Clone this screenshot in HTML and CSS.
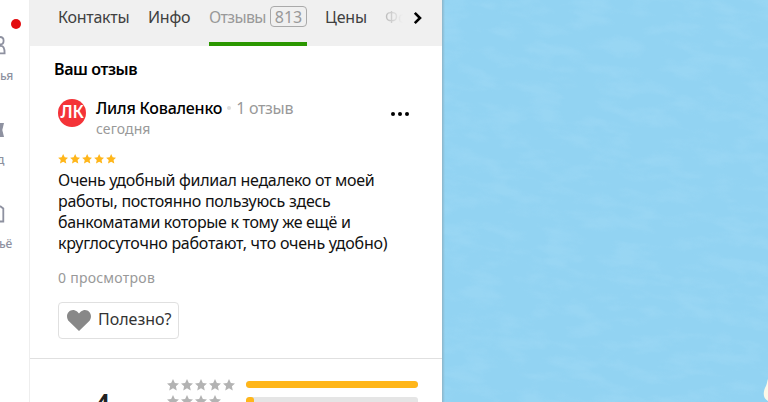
FILE: index.html
```html
<!DOCTYPE html>
<html lang="ru">
<head>
<meta charset="utf-8">
<title>Отзывы</title>
<link rel="stylesheet" href="styles.css">
</head>
<body>
<svg class="defs" width="0" height="0">
  <symbol id="star" viewBox="0 0 24 24"><path d="M12 0l3.700 7.900 8.300.9-6.200 5.600 1.700 8.600-7.500-4.300L4.500 23l1.700-8.600L0 8.800l8.300-.9z"/></symbol>
</svg>
<div class="app">
  <aside class="rail">
    <span class="dot"></span>
    <div class="item"><svg viewBox="0 0 8 20"><path d="M0 2C4.800 2 4.800 9.500 0 9.500M0 11C3.500 10.500 4.600 13 4.600 18.300H0" /></svg><span>ья</span></div>
    <div class="item second"><svg viewBox="0 0 8 20"><path class="fill" d="M0 4h4L2.300 11 4 18H0z"/></svg><span>д</span></div>
    <div class="item third"><svg viewBox="0 0 8 20"><path d="M0 3l3.300 2.500V18.500H0"/></svg><span>ьё</span></div>
  </aside>
  <main class="panel">
    <nav class="tabs">
      <a class="t1">Контакты</a>
      <a class="t2">Инфо</a>
      <a class="active"><span class="t3">Отзывы</span><span class="count">813</span></a>
      <a class="t4">Цены</a>
      <a class="faded">Фо</a>
      <svg class="next" viewBox="0 0 10 14"><path d="M1.800 1.800L7 7l-5.200 5.200"/></svg>
    </nav>
    <section class="review">
      <h2>Ваш отзыв</h2>
      <header class="author">
        <span class="avatar">ЛК</span>
        <div class="who">
          <div class="line"><b>Лиля Коваленко</b><i></i><span>1 отзыв</span></div>
          <div class="date">сегодня</div>
        </div>
        <div class="more"><i></i><i></i><i></i></div>
      </header>
      <div class="rating"><svg><use href="#star"/></svg><svg><use href="#star"/></svg><svg><use href="#star"/></svg><svg><use href="#star"/></svg><svg><use href="#star"/></svg></div>
      <p class="text"><span class="l1">Очень удобный филиал недалеко от моей</span><span class="l2">работы, постоянно пользуюсь здесь</span><span class="l3">банкоматами которые к тому же ещё и</span><span class="l4">круглосуточно работают, что очень удобно)</span></p>
      <div class="views">0 просмотров</div>
      <button class="useful"><svg viewBox="0 0 24 21"><path d="M12 21L2.200 11.600C-3 6 2-1.500 8 .4c1.800.6 3.200 1.700 4 3.200.8-1.500 2.200-2.600 4-3.200 6-1.900 11 5.600 5.800 11.200z"/></svg><span>Полезно?</span></button>
    </section>
    <section class="summary">
      <div class="score">4</div>
      <div class="rows">
        <div class="row"><div class="stars"><svg><use href="#star"/></svg><svg><use href="#star"/></svg><svg><use href="#star"/></svg><svg><use href="#star"/></svg><svg><use href="#star"/></svg></div><div class="bar"><span style="width:100%"></span></div></div>
        <div class="row"><div class="stars"><svg><use href="#star"/></svg><svg><use href="#star"/></svg><svg><use href="#star"/></svg><svg><use href="#star"/></svg></div><div class="bar"><span style="width:4.5%"></span></div></div>
      </div>
    </section>
  </main>
  <div class="map">
    <svg width="326" height="402">
      <filter id="water" x="0" y="0" width="100%" height="100%" color-interpolation-filters="sRGB">
        <feTurbulence type="fractalNoise" baseFrequency="0.028 0.075" numOctaves="4" seed="4"/>
        <feColorMatrix values="0 0 0 0 .62  0 0 0 0 .85  0 0 0 0 .96  3 0 0 0 -1.300"/>
      </filter>
      <g transform="rotate(8 163 201)"><rect x="-50" y="-50" width="430" height="500" filter="url(#water)" opacity=".55"/></g>
      <path class="land" d="M326 379c-1 2-1 6-3 9-2 5-2 10 3 13z"/>
    </svg>
  </div>
</div>
</body>
</html>
```
FILE: styles.css
```css
* { box-sizing: border-box; }
body { margin: 0; overflow: hidden; background: #fff; font: 16px/21px "Noto Sans", sans-serif; color: #1a1a1a; }
.defs { position: absolute; }
.app { display: grid; grid-template-columns: 30px 412px 326px; width: 768px; height: 402px; overflow: hidden; white-space: nowrap; }
.rail { position: relative; border-right: 1px solid #eee; padding-top: 35px; color: #8e91a0; overflow: hidden; }
.dot { position: absolute; left: 11px; top: 19px; width: 10px; height: 10px; border-radius: 50%; background: #e30c0f; }
.item { height: 84px; }
.item svg { display: block; width: 8px; height: 20px; fill: none; stroke: #8e91a0; stroke-width: 1.800; }
.item .fill { fill: #8e91a0; stroke: none; }
.item span { display: block; margin-top: 12px; font-size: 12px; line-height: 18px; font-weight: 500; letter-spacing: -.3px; }
.item.second span { margin-left: -3px; }
.item.third span { margin-left: -1px; }

.tabs { display: flex; height: 46px; padding: 7px 18px 0 28px; background: #f0f0f0; color: #404040; }
.tabs a { flex: none; }
.t1 { width: 90px; letter-spacing: -.25px; }
.t2 { width: 61px; letter-spacing: -.25px; }
.active { display: flex; justify-content: space-between; width: 98px; border-bottom: 4px solid #2b9700; color: #999; }
.t3 { letter-spacing: -.65px; }
.count { width: 37px; height: 21px; margin-top: -1px; border: 1px solid #aaa; border-radius: 4px; line-height: 20px; text-align: center; }
.t4 { width: 60px; margin-left: 18px; letter-spacing: -.15px; }
.tabs .faded { width: 18px; overflow: hidden; color: transparent; background: linear-gradient(90deg, #bbb, #f0f0f0); background-clip: text; -webkit-background-clip: text; }
.next { width: 10px; height: 14px; margin: 4px 0 0 10px; flex: none; fill: none; stroke: #000; stroke-width: 2.600; }

.review { height: 313px; padding: 13px 24px 0 28px; border-bottom: 1px solid #e0e0e0; }
h2 { margin: 0 0 0 -4px; font-size: 16px; line-height: 21px; font-weight: 600; color: #000; letter-spacing: -.4px; }
.author { display: flex; height: 54px; margin-top: 17px; }
.avatar { width: 28px; height: 28px; margin-top: 2px; border-radius: 50%; background: #f43338; color: #fff; font-weight: 600; font-size: 17px; line-height: 25px; text-align: center; letter-spacing: -.3px; }
.who { margin-left: 10px; }
.line { display: flex; align-items: center; height: 22px; color: #999; }
.line b { font-weight: 500; color: #000; letter-spacing: -.22px; }
.line span { letter-spacing: -.3px; }
.line i { width: 4px; height: 4px; margin: 0 5px; border-radius: 50%; background: #ddd; }
.date { font-size: 14px; line-height: 20px; color: #999; letter-spacing: .1px; }
.more { display: flex; gap: 3px; margin: 15px 9px 0 auto; }
.more i { width: 4px; height: 4px; border-radius: 50%; background: #000; }
.rating { display: flex; gap: 1.700px; height: 18px; }
.rating svg { width: 10.300px; height: 10px; margin-top: 3px; fill: #ffb61a; }
.text { margin: 1px 0 0; color: #111; }
.text span { display: block; height: 21px; width: max-content; }
.l1 { letter-spacing: -.3px; }
.l2 { letter-spacing: -.27px; }
.l3 { letter-spacing: -.32px; }
.l4 { letter-spacing: -.25px; }
.views { margin-top: 14px; font-size: 14px; line-height: 20px; color: #999; letter-spacing: .25px; }
.useful { display: flex; align-items: center; width: 121px; height: 37px; margin-top: 14px; padding: 0 0 0 8px; border: 1px solid #e0e0e0; border-radius: 4px; background: #fff; font: inherit; color: #333; }
.useful svg { width: 24px; height: 21px; fill: #888; }
.useful span { margin: -2px 0 0 7px; }

.summary { display: flex; }
.score { width: 137px; padding-left: 66px; margin-top: 26px; font-size: 24px; line-height: 34px; font-weight: 700; color: #222; }
.rows { padding-top: 18px; }
.row { display: flex; height: 16px; }
.stars { display: flex; gap: 2px; width: 79px; }
.stars svg { width: 12px; height: 12px; margin-top: 2px; fill: #b3b3b3; }
.bar { width: 172px; height: 7px; margin-top: 4px; border-radius: 3px; background: #e5e5e5; overflow: hidden; }
.bar span { display: block; height: 7px; border-radius: 3px; background: #ffb61a; }
.map { position: relative; background: #92d3f2; overflow: hidden; }
.map::before { content: ""; position: absolute; left: 0; top: 0; width: 3px; height: 100%; background: linear-gradient(90deg, #8cb5c9, #92d3f200); }
.map svg { display: block; }
.land { fill: #fcf8e8; }
```
